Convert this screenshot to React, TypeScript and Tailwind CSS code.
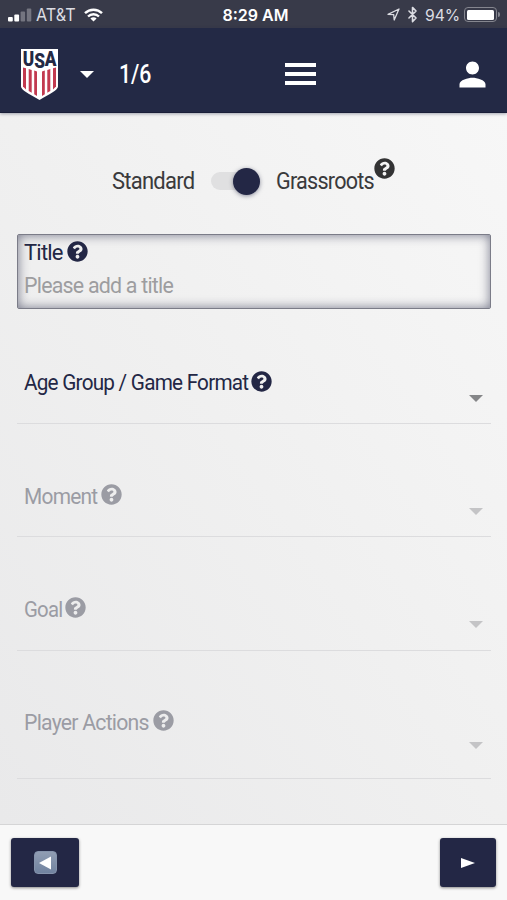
import type { ReactNode } from "react";
import { Bluetooth } from "lucide-react";
import { FaQuestionCircle } from "react-icons/fa";
import { MdPerson } from "react-icons/md";

const FIELDS = [
  {
    label: "Age Group / Game Format",
    row: "h-[115px] pt-[62px]",
    box: "w-[224px]",
    text: "scale-x-[0.941]",
    tone: "text-[#232745]",
    arrow: "mt-[24px] text-[#858688]",
  },
  {
    label: "Moment",
    row: "h-[113px] pt-[60px]",
    box: "mt-px w-[74px]",
    text: "scale-x-[0.95]",
    tone: "text-[#9b9ca4]",
    arrow: "mt-[24px] text-[#c4c4c6]",
  },
  {
    label: "Goal",
    row: "h-[114px] pt-[60px]",
    box: "mt-px w-[38px]",
    text: "scale-x-[0.925]",
    tone: "text-[#9b9ca4]",
    arrow: "mt-[24px] text-[#c4c4c6]",
  },
  {
    label: "Player Actions",
    row: "h-[128px] pt-[59px]",
    box: "mt-px w-[126px]",
    text: "scale-x-[0.966]",
    tone: "text-[#9b9ca4]",
    arrow: "mt-[32px] text-[#c4c4c6]",
  },
];

export default function App() {
  return (
    <div className="flex h-[900px] w-[507px] flex-col overflow-hidden bg-[#eeeeef] font-['Roboto',sans-serif]">
      <StatusBar />
      <NavBar />
      <main className="flex h-[711px] flex-col bg-linear-to-tr from-[#e9e9ea] via-[#f0f0f0] to-[#f7f7f7] pr-[16px] pl-[17px]">
        <FormatSwitch />
        <TitleField />
        {FIELDS.map((f) => (
          <SelectRow key={f.label} {...f} />
        ))}
      </main>
      <Footer />
    </div>
  );
}

function StatusBar() {
  return (
    <div className="grid h-7 grid-cols-3 items-center bg-[#383a49] pt-px pr-[7px] pl-2 font-['Inter',sans-serif] text-[16px] leading-none text-[#dcdde3]">
      <div className="flex items-center">
        <svg width="24" height="14" viewBox="0 0 24 14" fill="#fff">
          <rect x="0" y="9" width="4.8" height="4.5" rx="1" />
          <rect x="6.3" y="6.5" width="4.8" height="7" rx="1" />
          <rect x="12.6" y="3.5" width="4.5" height="10" rx="1" opacity="0.3" />
          <rect x="18.8" y="0.5" width="4.5" height="13" rx="1" opacity="0.3" />
        </svg>
        <Condensed box="ml-[4px] w-[40px] text-[17px]" text="scale-x-[0.95]">AT&amp;T</Condensed>
        <svg className="ml-[8px]" width="19" height="14" viewBox="0 0 19 14" fill="none" stroke="#fff" strokeWidth="2.4">
          <path d="M1 5.2a12.2 12.2 0 0 1 17 0" />
          <path d="M4 8.5a7.9 7.9 0 0 1 11 0" />
          <path d="M9.5 13.6 6.4 10.5a4.4 4.4 0 0 1 6.2 0z" fill="#fff" stroke="none" />
        </svg>
      </div>
      <div className="pl-[3px] text-center font-semibold whitespace-nowrap text-white">8:29 AM</div>
      <div className="flex items-center justify-end">
        <svg width="13" height="13" viewBox="0 0 13 13" fill="none" stroke="#dcdde3" strokeWidth="1.3" strokeLinejoin="round">
          <path d="M1 6.3 12 1 7.2 12 6.7 6.6z" />
        </svg>
        <Bluetooth className="ml-[4px] h-[17px] w-[17px]" strokeWidth={2.2} />
        <Condensed box="ml-[4px] w-[35px]" text="scale-x-[0.98]">94%</Condensed>
        <div className="ml-[4px] flex h-[15px] w-[33px] rounded-[4px] border border-[#85868f] p-[1.5px]">
          <div className="w-[27px] rounded-[1.5px] bg-white" />
        </div>
        <div className="ml-[1px] h-[5px] w-[2px] rounded-r-full bg-[#85868f]" />
      </div>
    </div>
  );
}

function NavBar() {
  return (
    <header className="z-10 flex h-[85px] items-center border-b border-[#1a1e38] bg-[#232945] pt-[8px] pr-[16px] pl-[20px] text-white shadow-[0_1px_3px_rgba(35,41,69,0.4)]">
      <Crest />
      <Caret className="ml-[21px] text-white" />
      <Condensed box="ml-[25px] mt-[2px] w-[30px] text-[25px] font-medium" text="scale-x-[0.85]">1/6</Condensed>
      <div className="ml-[136px] flex flex-col gap-[5px]">
        <div className="h-[4px] w-[31px] bg-white" />
        <div className="h-[4px] w-[31px] bg-white" />
        <div className="h-[4px] w-[31px] bg-white" />
      </div>
      <MdPerson className="mt-px -mr-px ml-auto h-[39px] w-[39px]" />
    </header>
  );
}

function Crest() {
  return (
    <svg className="shrink-0" width="39" height="53" viewBox="0 0 39 53">
      <path d="M1 1h37v37.5c0 3.5-8 7.5-18.5 13.5C9 46 1 42 1 38.5z" fill="#fff" />
      <g fill="#c23a50">
        <path d="M3 19.5l3 .8v21.2L3 38.500z" />
        <path d="M8.700 21l3 .9v22.800l-3-1.700z" />
        <path d="M14.200 22.500l2.800 1.100v24.300l-2.800-1.700z" />
        <path d="M22 23.600l2.800-1.100v23.700L22 47.900z" />
        <path d="M27.300 21.900l3-.9v22l-3 1.700z" />
        <path d="M33 20.300l3-.8v19l-3 3z" />
      </g>
      <text
        transform="translate(2.800 17.800) scale(0.84 1)"
        x="0 13.600 26.200"
        dy="0 2.200 -2.200"
        fontFamily="Roboto, sans-serif"
        fontSize="20.500"
        fontWeight="900"
        fill="#232945"
      >
        USA
      </text>
    </svg>
  );
}

function FormatSwitch() {
  return (
    <div className="flex h-[121px] items-start pt-[55px] pl-[95px] text-[23px] tracking-[-0.8px] text-[#3a3a3c]">
      <Condensed box="mt-[2px] w-[82px]" text="scale-x-[0.957]">Standard</Condensed>
      <div className="mt-[4px] ml-[17px] flex h-[18px] w-[49px] items-center justify-end rounded-full bg-[#e0e0e1]">
        <div className="h-[27px] w-[27px] shrink-0 rounded-full bg-[#232745] shadow-[0_1px_4px_rgba(35,39,69,0.5)]" />
      </div>
      <Condensed box="mt-[2px] ml-[16px] w-[98px]" text="scale-x-[0.938]">Grassroots</Condensed>
      <FaQuestionCircle className="-mt-[10px] h-[21px] w-[21px] text-[#333334]" />
    </div>
  );
}

function TitleField() {
  return (
    <div className="h-[75px] shrink-0 rounded-[2px] border-[1.5px] border-[#7b7c88] pt-[5px] pl-[6px] text-[22px] tracking-[-0.8px] shadow-[inset_0_0_11px_rgba(35,39,69,0.6)]">
      <div className="flex items-center text-[#232745]">
        <Condensed box="mt-px w-[39px]" text="scale-x-[1]">Title</Condensed>
        <FaQuestionCircle className="-mt-[3px] ml-[4px] h-[21px] w-[21px]" />
      </div>
      <Condensed box="mt-[9px] w-[150px] text-[#9d9d9f]" text="scale-x-[0.972]">Please add a title</Condensed>
    </div>
  );
}

function SelectRow({ label, row, box, text, tone, arrow }: {
  label: string;
  row: string;
  box: string;
  text: string;
  tone: string;
  arrow: string;
}) {
  return (
    <div className={`flex shrink-0 items-start border-b border-[#dcdcde] pr-[8px] pl-[7px] text-[22px] tracking-[-0.8px] ${row} ${tone}`}>
      <Condensed box={box} text={text}>{label}</Condensed>
      <FaQuestionCircle className="ml-[3px] h-[21px] w-[21px]" />
      <Caret className={`ml-auto ${arrow}`} />
    </div>
  );
}

function Footer() {
  return (
    <footer className="flex h-[76px] items-start justify-between border-t border-[#d5d5d6] bg-[#f8f8f8] px-[11px] pt-[13px]">
      <button className="flex h-[49px] w-[68px] items-center justify-center rounded-[3px] bg-[#232745] shadow-[0_1px_3px_rgba(0,0,0,0.45)]">
        <span className="flex h-[23px] w-[23px] items-center justify-center rounded-[4px] border border-[#8593ac] bg-linear-to-b from-[#909db3] to-[#7183a0]">
          <svg width="13" height="14" viewBox="0 0 13 14" fill="#fff">
            <path d="M0 7 12 .5v13z" />
          </svg>
        </span>
      </button>
      <button className="flex h-[49px] w-[56px] items-center justify-center rounded-[3px] bg-[#232745] shadow-[0_1px_3px_rgba(0,0,0,0.45)]">
        <svg width="14" height="10" viewBox="0 0 14 10" fill="#fff">
          <path d="M0 0 14 5 0 10z" />
        </svg>
      </button>
    </footer>
  );
}

// Narrow lettering: the box keeps the final width, the text inside is squeezed into it
function Condensed({ box, text, children }: { box: string; text: string; children: ReactNode }) {
  return (
    <div className={`shrink-0 leading-[24px] ${box}`}>
      <span className={`inline-block origin-left align-top whitespace-nowrap ${text}`}>{children}</span>
    </div>
  );
}

function Caret({ className }: { className: string }) {
  return (
    <svg className={`shrink-0 ${className}`} width="14" height="7" viewBox="0 0 14 7" fill="currentColor">
      <path d="M0 0h14L7 7z" />
    </svg>
  );
}
